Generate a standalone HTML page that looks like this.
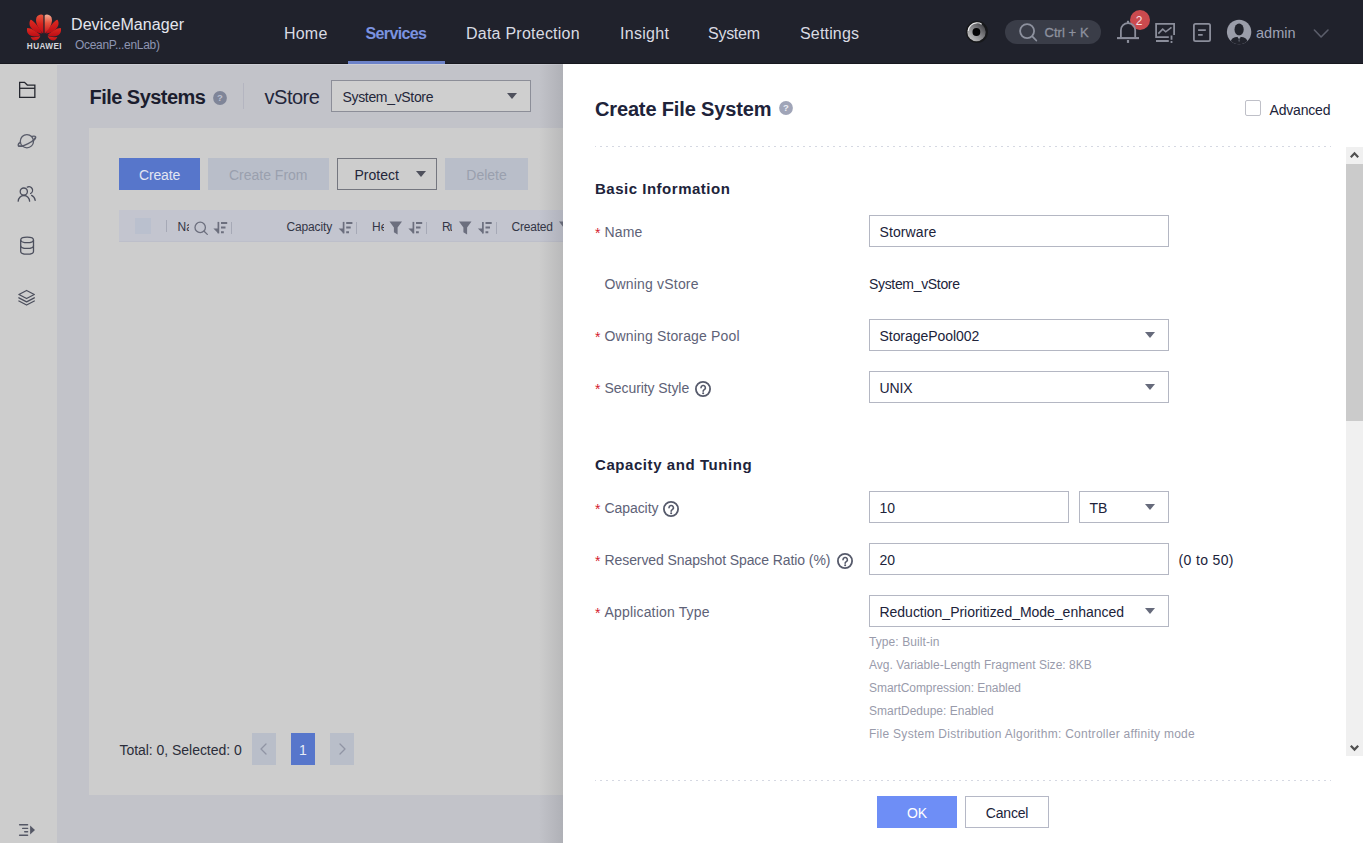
<!DOCTYPE html>
<html>
<head>
<meta charset="utf-8">
<title>DeviceManager</title>
<style>
*{box-sizing:border-box;margin:0;padding:0}
html,body{width:1363px;height:843px;overflow:hidden;background:#c2c3c9;font-family:"Liberation Sans",sans-serif;}
body{position:relative}
.a{position:absolute}
.t{position:absolute;white-space:nowrap;line-height:1}
#hdr{left:0;top:0;width:1363px;height:64px;background:#20222c;border-bottom:1px solid #17181f}
#side{left:0;top:64px;width:57px;height:779px;background:#cdcdcd}
#card{left:89px;top:128px;width:480px;height:667px;background:#cdcdcd}
#panel{left:563px;top:64px;width:800px;height:779px;background:#fff}
#shadow{left:539px;top:64px;width:24px;height:779px;background:linear-gradient(to right,rgba(50,52,58,0),rgba(50,52,58,.13))}
.nav{font-size:16px;color:#d9dbe3;top:26px}
.btn{position:absolute;height:32px;font-size:14px;line-height:34px;text-align:center;white-space:nowrap}
.lbl{font-size:14px;color:#5e6277}
.val{font-size:14px;color:#20233a}
.star{font-size:14px;color:#d4202e;left:595px}
.inp{position:absolute;height:32px;border:1px solid #b4b7c3;background:#fff}
.hint{font-size:12px;color:#999bab;left:869px}
.tri{position:absolute;width:0;height:0;border-left:5px solid transparent;border-right:5px solid transparent;border-top:6px solid #666a7b}
.th{font-size:12px;color:#333646;top:221px}
.sep{position:absolute;width:1px;height:12px;top:222px;background:#a6a9b6}
.dash{position:absolute;left:595px;width:736px;height:1px;background:repeating-linear-gradient(to right,#d5d8e2 0,#d5d8e2 1px,transparent 1px,transparent 4.984px,#d5d8e2 4.984px,#d5d8e2 5.984px)}
</style>
</head>
<body>
<!-- background page -->
<div class="a" id="side"></div>
<svg class="a" style="left:0;top:64px" width="57" height="779" viewBox="0 64 57 779" fill="none" stroke="#4c4f5d" stroke-width="1.300">
<g stroke="#25272f" stroke-linejoin="miter"><path d="M19.650 97.350V82.350H24.500L27.300 85.050H34.850V97.350Z"/><path d="M19.650 88.300H34.850"/></g>
<g stroke="#585b69">
<g transform="translate(26.900 141.200) rotate(-27)"><ellipse cx="0" cy="0" rx="9.700" ry="2.700"/></g>
<circle cx="26.900" cy="141.200" r="6.600" fill="#cdcdcd"/>
<g transform="translate(26.900 141.200) rotate(-27)"><path d="M-9.700 0A9.700 2.700 0 0 0 9.700 0"/></g>
</g>
<g stroke-linecap="round">
<circle cx="23.800" cy="191.600" r="3.600"/>
<path d="M18.200 201.200a5.700 5.700 0 0 1 11.400 0"/>
<path d="M27.300 187.100A3.600 3.600 0 1 1 30.600 193.500"/>
<path d="M31.600 195.400C33.700 196.400 34.900 198.100 35.200 200.300"/>
</g>
<g>
<ellipse cx="27.100" cy="239.900" rx="6.400" ry="2.700"/>
<path d="M20.700 239.900V251.500A6.400 2.700 0 0 0 33.500 251.500V239.900"/>
<path d="M20.700 245.700A6.400 2.700 0 0 0 33.500 245.700"/>
</g>
<g stroke-linejoin="round" stroke-linecap="round">
<path d="M26.600 290.500L34.300 294.500L26.600 298.500L18.900 294.500Z"/>
<path d="M18.900 297.800L26.600 301.800L34.300 297.800"/>
<path d="M18.900 301L26.600 305L34.300 301"/>
</g>
<g stroke="#555866" stroke-width="1.400" stroke-linecap="round">
<path d="M19.600 824.800H27.600M22.700 828.400H27.600M24.700 831.700H27.600M19.600 835.200H27.600"/>
<path d="M30.100 825.500V834.500L35 830Z" fill="#555866" stroke="none"/>
</g>
</svg>
<div class="a" style="left:57px;top:64px;width:506px;height:1px;background:#cdced5"></div>
<!-- title row -->
<div class="t" style="left:89.500px;top:87px;font-size:20px;font-weight:700;color:#1b1d2e;letter-spacing:-.53px">File Systems</div>
<svg class="a" style="left:213px;top:91px" width="14" height="14" viewBox="0 0 14 14"><circle cx="7" cy="7" r="6.900" fill="#7f8598"/><text x="7" y="10.300" font-family="Liberation Sans,sans-serif" font-size="9.500" font-weight="700" fill="#bcc0d0" text-anchor="middle">?</text></svg>
<div class="a" style="left:243px;top:83px;width:1px;height:26px;background:#b4b5c0"></div>
<div class="t" style="left:264.500px;top:87px;font-size:20px;color:#23263a;letter-spacing:-.48px">vStore</div>
<div class="a" style="left:331px;top:80px;width:200px;height:32px;border:1px solid #8c8e98;background:#cfcfcf"></div>
<div class="t" style="left:342.500px;top:89.600px;font-size:14px;color:#24273a;letter-spacing:-.33px">System_vStore</div>
<div class="tri" style="left:507px;top:93px;border-top-color:#4e505c"></div>
<div class="a" id="card"></div>
<div class="btn" style="left:119px;top:158px;width:81px;background:#5776cb;color:#e3e6f2;letter-spacing:-.15px">Create</div>
<div class="btn" style="left:208px;top:158px;width:120.500px;background:#b9bec9;color:#9aa0ae">Create From</div>
<div class="btn" style="left:337px;top:158px;width:100px;border:1px solid #74767f;color:#23263a;line-height:32px;text-align:left;padding-left:16.500px">Protect</div>
<div class="tri" style="left:416px;top:171px;border-top-color:#4e505c"></div>
<div class="btn" style="left:445px;top:158px;width:83px;background:#b9bec9;color:#9aa0ae">Delete</div>
<!-- table header -->
<div class="a" style="left:119px;top:210px;width:450px;height:32px;background:#c3c5cf;border-bottom:1px solid #bdbfca"></div>
<div class="a" style="left:135px;top:218px;width:16px;height:16px;background:#bac0ce"></div>
<div class="sep" style="left:166px;top:220px"></div>
<div class="a" style="left:177px;top:215px;width:12px;height:22px;overflow:hidden"><div class="t th" style="left:.5px;top:6px">Name</div></div>
<div class="sep" style="left:231px"></div>
<div class="t th" style="left:286.500px;letter-spacing:-.15px">Capacity</div>
<div class="sep" style="left:356px"></div>
<div class="a" style="left:372px;top:215px;width:11.500px;height:22px;overflow:hidden"><div class="t th" style="left:0;top:6px">Health</div></div>
<div class="sep" style="left:426px"></div>
<div class="a" style="left:442px;top:215px;width:10px;height:22px;overflow:hidden"><div class="t th" style="left:0;top:6px;letter-spacing:-1.100px">Running</div></div>
<div class="sep" style="left:496px"></div>
<div class="t th" style="left:511.500px;letter-spacing:-.2px">Created</div>
<svg class="a" style="left:57px;top:200px" width="506" height="50" viewBox="57 200 506 50" fill="none">
<defs>
<g id="sort"><path d="M5 0V11.500" stroke="#6c6f7e" stroke-width="1.700"/><path d="M0 6.600H5V11.700Z" fill="#6c6f7e"/><path d="M7.600 1H13.800M7.600 5.700H12.100M7.600 10.300H10.400" stroke="#6c6f7e" stroke-width="2"/></g>
<g id="filt"><path d="M0 0H12.500L8.100 6V13L4.400 10.800V6Z" fill="#6c6f7e"/></g>
</defs>
<g stroke="#6c6f7e" stroke-width="1.300" stroke-linecap="round"><circle cx="200.200" cy="227.400" r="5.200"/><path d="M204.100 231.300L207.300 234.400"/></g>
<use href="#sort" x="213.400" y="221.900"/>
<use href="#sort" x="338.600" y="221.900"/>
<use href="#sort" x="408.400" y="221.900"/>
<use href="#sort" x="477.900" y="221.900"/>
<use href="#filt" x="389.500" y="221.400"/>
<use href="#filt" x="459" y="221.400"/>
<use href="#filt" x="559" y="221.400"/>
</svg>
<!-- pagination -->
<div class="t" style="left:119.500px;top:743px;font-size:14px;color:#2b2d3a;letter-spacing:-.04px">Total: 0, Selected: 0</div>
<div class="a" style="left:252px;top:733px;width:24px;height:32px;background:#b9bec9"></div>
<svg class="a" style="left:258px;top:742px" width="12" height="14" viewBox="0 0 12 14" fill="none" stroke="#9094a4" stroke-width="1.300" stroke-linecap="round" stroke-linejoin="round"><path d="M8 2L3 7l5 5"/></svg>
<div class="a" style="left:291px;top:733px;width:24px;height:32px;background:#5776cb"></div>
<div class="t" style="left:299px;top:743px;font-size:14px;color:#e8ebf6">1</div>
<div class="a" style="left:330px;top:733px;width:24px;height:32px;background:#b9bec9"></div>
<svg class="a" style="left:336px;top:742px" width="12" height="14" viewBox="0 0 12 14" fill="none" stroke="#9094a4" stroke-width="1.300" stroke-linecap="round" stroke-linejoin="round"><path d="M4 2l5 5-5 5"/></svg>

<!-- header -->
<div class="a" id="hdr">
<!-- logo -->
<svg class="a" style="left:0;top:0" width="80" height="64" viewBox="0 0 80 64">
<defs>
<linearGradient id="lg" x1="0" y1="0" x2="0" y2="1"><stop offset="0" stop-color="#dd2a20"/><stop offset="1" stop-color="#bd0c15"/></linearGradient>
<linearGradient id="lg2" x1="0" y1="0" x2="0" y2="1"><stop offset="0" stop-color="#f4ad98"/><stop offset=".45" stop-color="#e8553f"/><stop offset="1" stop-color="#c8141a"/></linearGradient>
<linearGradient id="lg3" x1="0" y1="0" x2="0" y2="1"><stop offset="0" stop-color="#e8563f"/><stop offset=".5" stop-color="#d6231d"/><stop offset="1" stop-color="#bd0c15"/></linearGradient>
<g id="half">
<path d="M30.600 19.700C32.400 19.400 38.600 26 42.100 33.500C36.800 33.100 31.600 30.100 29.900 25.800C29.100 23.700 29.400 20.900 30.600 19.700Z"/>
<path d="M27.200 28C30 27.600 36.300 31.200 40.500 35.200C36 37.300 30.600 36.800 28.200 33.800C26.900 32.200 26.700 29.700 27.200 28Z"/>
<path d="M30.700 36.900C34 37.500 37.600 37.100 40.300 36.100C39.800 38.400 37.700 40.200 35 40.500C32.900 40.500 31.300 38.800 30.700 36.900Z"/>
</g>
<path id="ptop" d="M43.400 15.400C42.200 14 38.300 14 36.500 17.500C34.900 21.600 37.500 28 42.800 33.200L43.400 33.200Z"/>
</defs>
<use href="#half" fill="url(#lg)"/>
<use href="#ptop" fill="url(#lg3)"/>
<g transform="translate(88 0) scale(-1 1)"><use href="#half" fill="url(#lg)"/><use href="#ptop" fill="url(#lg2)"/></g>
</svg>
<div class="t" style="left:26.800px;top:43px;font-size:8.200px;font-weight:700;color:#d6d7dd;letter-spacing:.42px">HUAWEI</div>
<div class="t" style="left:71px;top:16.500px;font-size:16px;color:#e4e6ee;letter-spacing:.08px">DeviceManager</div>
<div class="t" style="left:75px;top:39px;font-size:12px;color:#8e95b3;letter-spacing:-.3px">OceanP...enLab)</div>
<!-- nav -->
<div class="t nav" style="left:284px;letter-spacing:.2px">Home</div>
<div class="t nav" style="left:365.500px;font-weight:700;color:#7b93e0;letter-spacing:-.63px">Services</div>
<div class="a" style="left:348px;top:61px;width:97px;height:3px;background:#6c82c9"></div>
<div class="t nav" style="left:466px;letter-spacing:.24px">Data Protection</div>
<div class="t nav" style="left:620px;letter-spacing:.3px">Insight</div>
<div class="t nav" style="left:708px;letter-spacing:-.27px">System</div>
<div class="t nav" style="left:800px;letter-spacing:.17px">Settings</div>
<!-- right icons -->
<div class="a" style="left:1005px;top:20px;width:96px;height:24px;border-radius:12px;background:#3a3d48"></div>
<div class="a" style="left:1130px;top:10px;width:20.400px;height:20.400px;border-radius:50%;background:#cb4a4e"></div>
<svg class="a" style="left:0;top:0" width="1363" height="64" viewBox="0 0 1363 64" fill="none">
<defs>
<linearGradient id="eg" x1="0.15" y1="0.85" x2="0.85" y2="0.15"><stop offset="0" stop-color="#bdbdbd"/><stop offset="0.5" stop-color="#87878a"/><stop offset="1" stop-color="#4a4a4e"/></linearGradient>
<clipPath id="ac"><circle cx="1239.100" cy="32" r="12.200"/></clipPath>
</defs>
<!-- eye -->
<circle cx="976.900" cy="31.800" r="11.100" fill="#17181b"/>
<circle cx="976.500" cy="32" r="9.200" fill="url(#eg)"/>
<path d="M968.300 30.500c.5-4 3.700-7.200 8-7.700 2-.2 3.800.3 5 1.200" stroke="#fafafa" stroke-width="1.200" stroke-linecap="round" opacity=".9"/>
<circle cx="976.400" cy="32" r="3.900" fill="#040405"/>
<!-- magnifier -->
<g stroke="#8d919e" stroke-width="1.800" stroke-linecap="round"><circle cx="1027.100" cy="31.100" r="7"/><path d="M1032.300 36.300l4 4.200"/></g>
<!-- bell -->
<g stroke="#8b8e9b" stroke-width="1.800">
<path d="M1117 38.100h22" stroke-width="2.100"/>
<path d="M1120.900 37.500V30.200a7.150 7.150 0 0 1 14.300 0v7.300"/>
<path d="M1128 20.800v2.200" stroke-width="2.200"/>
<path d="M1128 40v2.900" stroke-width="2.200"/>
</g>
<!-- chart -->
<g stroke="#8b8e9b" stroke-width="1.800">
<path d="M1174.100 35V23.900h-18v13.200h12.700"/>
<path d="M1156 41h12.800" stroke-width="2"/>
<path d="M1171.500 35.400v4.400M1171.500 40.900v2"/>
<path d="M1158.300 33.600l4.400-4.400 3 2.600 5.800-4.400" stroke-width="1.600"/>
</g>
<!-- doc -->
<g stroke="#8b8e9b" stroke-width="1.800">
<rect x="1193.900" y="23.900" width="16.200" height="17.200" rx="1.600"/>
<path d="M1198.100 30.100h7.700M1198.100 34.900h4.600"/>
</g>
<!-- avatar -->
<circle cx="1239.100" cy="32" r="12.200" fill="#9a9da9"/>
<g clip-path="url(#ac)" fill="#21232c"><ellipse cx="1239.100" cy="29.500" rx="4.600" ry="6"/><path d="M1230.300 45c0-5.500 2-8.200 8.800-8.200s8.800 2.700 8.800 8.200z"/></g>
<path d="M1237.300 35.800h3.600l-.9 2.700h-1.800z" fill="#9a9da9"/>
<path d="M1239.100 37.800l-.7 3 .7 1.400.7-1.400z" fill="#9a9da9" opacity=".5"/>
<!-- chevron -->
<path d="M1314.400 30l6.700 7 6.900-7" stroke="#5b5e6b" stroke-width="1.600" stroke-linecap="round" stroke-linejoin="round"/>
</svg>
<div class="t" style="left:1044.500px;top:26.200px;font-size:13px;color:#8d919e;letter-spacing:.05px;-webkit-text-stroke:.3px #8d919e">Ctrl + K</div>
<div class="t" style="left:1135.700px;top:14.700px;font-size:12px;color:#f6dfe0">2</div>
<div class="t" style="left:1256px;top:25.600px;font-size:14.500px;color:#9fa3b6">admin</div>
</div>
<!-- panel -->
<div class="a" id="shadow"></div>
<div class="a" id="panel"></div>
<svg width="0" height="0" style="position:absolute"><defs>
<g id="q"><circle cx="8" cy="8" r="7.100" fill="none" stroke="#565a6b" stroke-width="1.800"/><path d="M6 6.700a2.200 2.200 0 1 1 3.300 1.900c-.8.450-1.150.9-1.150 1.600" fill="none" stroke="#565a6b" stroke-width="1.600" stroke-linecap="round"/><circle cx="8.150" cy="12.300" r="1.050" fill="#565a6b"/></g>
</defs></svg>
<div class="t" style="left:595px;top:99px;font-size:20px;font-weight:700;color:#20233a;letter-spacing:-.15px">Create File System</div>
<svg class="a" style="left:779px;top:101px" width="14" height="14" viewBox="0 0 14 14"><circle cx="7" cy="7" r="6.900" fill="#a0a5b8"/><text x="7" y="10.300" font-family="Liberation Sans,sans-serif" font-size="9.500" font-weight="700" fill="#eceef5" text-anchor="middle">?</text></svg>
<div class="a" style="left:1245px;top:100px;width:16px;height:16px;border:1px solid #bfc0c8;border-radius:2px;background:#fff"></div>
<div class="t val" style="left:1269.500px;top:102.500px;letter-spacing:-.18px">Advanced</div>
<div class="dash" style="top:146px"></div>
<div class="dash" style="top:780px"></div>
<!-- scrollbar -->
<div class="a" style="left:1346px;top:147px;width:17px;height:609px;background:#f0f0f0"></div>
<div class="a" style="left:1346px;top:164px;width:17px;height:257px;background:#cbcbcb"></div>
<svg class="a" style="left:1346px;top:147px" width="17" height="609" viewBox="1346 147 17 609" fill="none" stroke="#505050" stroke-width="2.200"><path d="M1350.800 157.200L1354.500 153.300L1358.200 157.200"/><path d="M1350.800 745.700L1354.500 749.600L1358.200 745.700"/></svg>
<!-- section 1 -->
<div class="t" style="left:595px;top:181px;font-size:15px;font-weight:700;color:#20233a;letter-spacing:.51px">Basic Information</div>
<div class="t star" style="top:226.0px">*</div>
<div class="t lbl" style="left:604.500px;top:225.0px;letter-spacing:0.15px">Name</div>
<div class="inp" style="left:869px;top:215px;width:300px"></div>
<div class="t val" style="left:879.5px;top:225.2px;letter-spacing:0.11px">Storware</div>
<div class="t lbl" style="left:604.500px;top:277.2px;letter-spacing:0.18px">Owning vStore</div>
<div class="t val" style="left:869px;top:277.4px;letter-spacing:-0.33px">System_vStore</div>
<div class="t star" style="top:330.3px">*</div>
<div class="t lbl" style="left:604.500px;top:329.3px;letter-spacing:0.15px">Owning Storage Pool</div>
<div class="inp" style="left:869px;top:319px;width:300px"></div>
<div class="t val" style="left:879.5px;top:329.3px;letter-spacing:-0.05px">StoragePool002</div>
<div class="tri" style="left:1145px;top:332px"></div>
<div class="t star" style="top:382.1px">*</div>
<div class="t lbl" style="left:604.500px;top:381.1px;letter-spacing:-0.07px">Security Style</div>
<svg class="a" style="left:695px;top:381px" width="16" height="16" viewBox="0 0 16 16"><use href="#q"/></svg>
<div class="inp" style="left:869px;top:371px;width:300px"></div>
<div class="t val" style="left:879.5px;top:381.3px;letter-spacing:-0.15px">UNIX</div>
<div class="tri" style="left:1145px;top:384px"></div>
<!-- section 2 -->
<div class="t" style="left:595px;top:457px;font-size:15px;font-weight:700;color:#20233a;letter-spacing:.57px">Capacity and Tuning</div>
<div class="t star" style="top:502.4px">*</div>
<div class="t lbl" style="left:604.500px;top:501.4px;letter-spacing:-0.07px">Capacity</div>
<svg class="a" style="left:663px;top:501px" width="16" height="16" viewBox="0 0 16 16"><use href="#q"/></svg>
<div class="inp" style="left:869px;top:491px;width:200px"></div>
<div class="t val" style="left:879.5px;top:501.4px;letter-spacing:0px">10</div>
<div class="inp" style="left:1079px;top:491px;width:90px"></div>
<div class="t val" style="left:1089.5px;top:501.4px;letter-spacing:0px">TB</div>
<div class="tri" style="left:1145px;top:504px"></div>
<div class="t star" style="top:554.1px">*</div>
<div class="t lbl" style="left:604.500px;top:553.1px;letter-spacing:-0.09px">Reserved Snapshot Space Ratio (%)</div>
<svg class="a" style="left:837px;top:553px" width="16" height="16" viewBox="0 0 16 16"><use href="#q"/></svg>
<div class="inp" style="left:869px;top:543px;width:300px"></div>
<div class="t val" style="left:879.5px;top:553.4px;letter-spacing:0px">20</div>
<div class="t val" style="left:1178.5px;top:553.4px;letter-spacing:0.36px">(0 to 50)</div>
<div class="t star" style="top:606.1px">*</div>
<div class="t lbl" style="left:604.500px;top:605.1px;letter-spacing:0.17px">Application Type</div>
<div class="inp" style="left:869px;top:595px;width:300px"></div>
<div class="t val" style="left:879.5px;top:605.4px;letter-spacing:-0.02px">Reduction_Prioritized_Mode_enhanced</div>
<div class="tri" style="left:1145px;top:608px"></div>
<div class="t hint" style="top:635.9px;letter-spacing:0.08px">Type: Built-in</div>
<div class="t hint" style="top:658.8px;letter-spacing:0.03px">Avg. Variable-Length Fragment Size: 8KB</div>
<div class="t hint" style="top:681.7px;letter-spacing:-0.06px">SmartCompression: Enabled</div>
<div class="t hint" style="top:704.8px;letter-spacing:0px">SmartDedupe: Enabled</div>
<div class="t hint" style="top:727.8px;letter-spacing:0.28px">File System Distribution Algorithm: Controller affinity mode</div>
<!-- footer -->
<div class="btn" style="left:877px;top:796px;width:80px;background:#6e8ef6;color:#fff">OK</div>
<div class="btn" style="left:965px;top:796px;width:84px;border:1px solid #b5b8c6;color:#20233a;line-height:32px;letter-spacing:-.22px">Cancel</div>
</body>
</html>
